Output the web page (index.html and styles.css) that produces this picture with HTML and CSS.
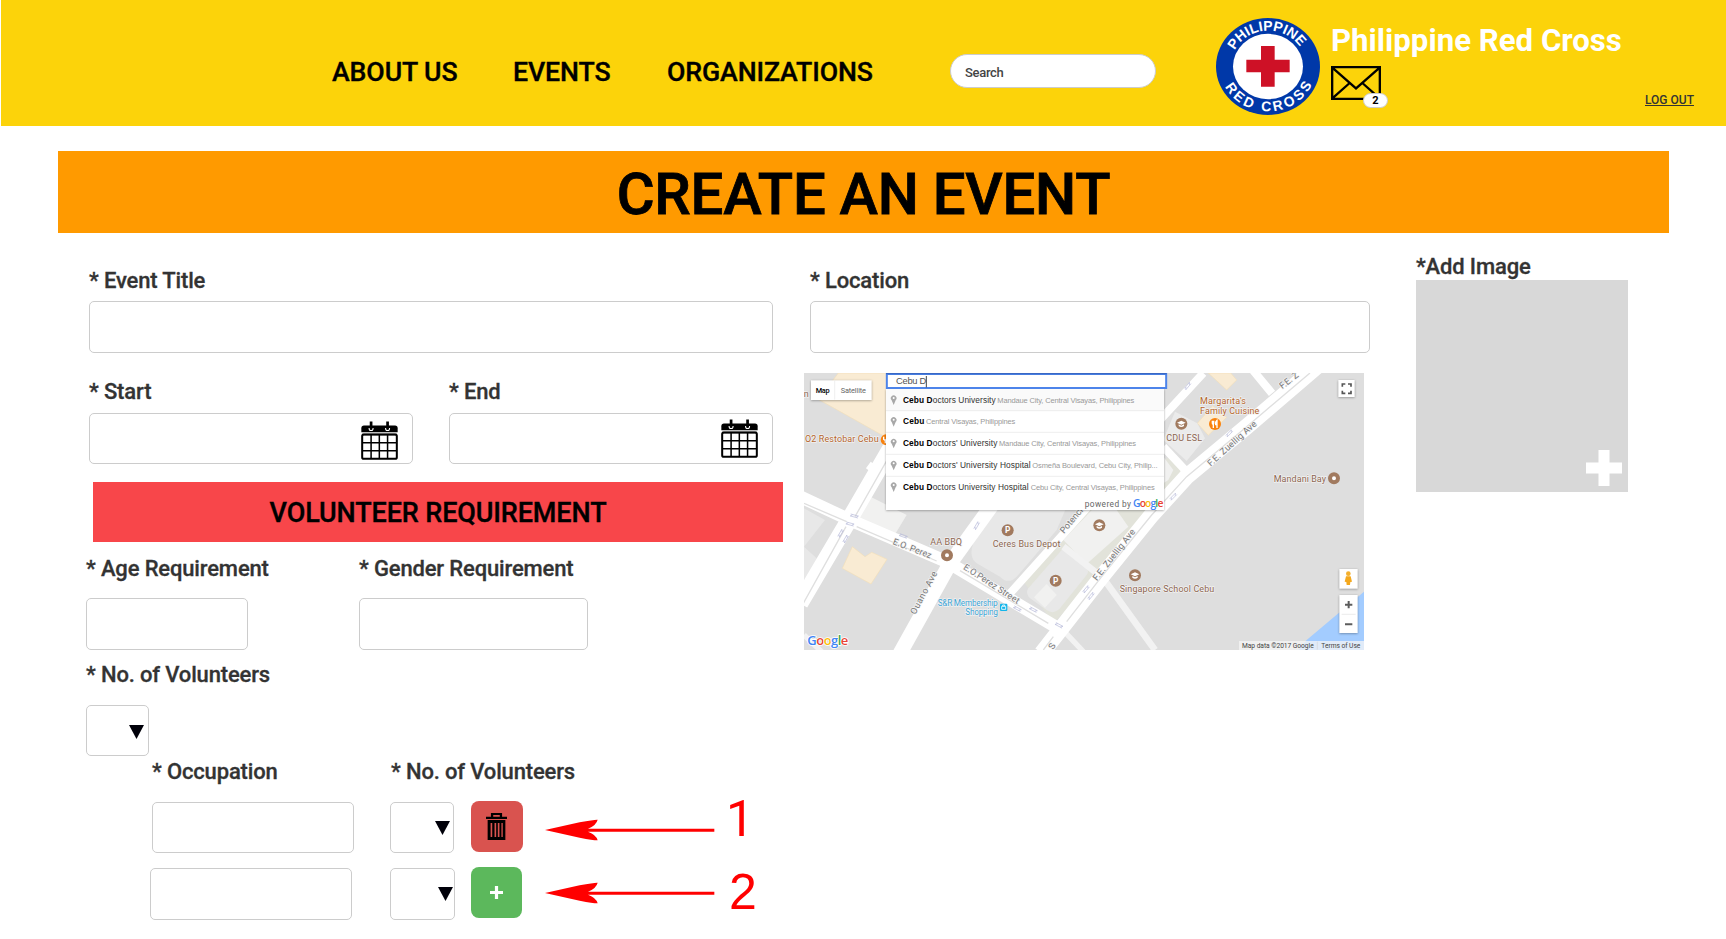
FILE: index.html
```html
<!DOCTYPE html>
<html lang="en">
<head>
<meta charset="utf-8">
<title>Create an Event</title>
<link rel="stylesheet" href="styles.css">
</head>
<body>
<svg class="defs" width="0" height="0">
  <defs>
    <symbol id="calendar" viewBox="0 0 110 115">
      <path d="M9 13h92q8 0 8 8v12H1V21q0-8 8-8z"/>
      <path d="M30 1v26M79 1v26" stroke="#000" stroke-width="8"/>
      <path d="M24 20q0 8 6 8t6-8M73 20q0 8 6 8t6-8" fill="none" stroke="#fff" stroke-width="3"/>
      <rect x="3.500" y="40" width="103" height="72" rx="5" fill="#fff" stroke="#000" stroke-width="6"/>
      <path d="M3 40h104M30 38v74M54.500 38v74M79 38v74M3 64h104M3 88h104" stroke="#000" stroke-width="4.500"/>
    </symbol>
    <symbol id="arrow" viewBox="0 0 510 64">
      <path d="M0 32 104 9Q150 0 158 1 154 18 129 28H508V37H129Q154 46 158 63 150 64 104 55z" fill="#f00"/>
    </symbol>
    <g id="cap-pin">
      <circle r="18" fill="#a17a5f"/>
      <path d="M-13-3 0-9 13-3 0 3zM-8 2v5Q0 13 8 7V2L0 6z" fill="#fff"/>
    </g>
    <g id="place"><path d="M0 14-6 0A8.500 8.500 0 1 1 6 0z" fill="#a8a8a8"/><circle cy="-7" r="3" fill="#fff"/></g>
    <g id="lane"><path d="M-12 3H12M-12 3l6-5M12-3H-12M12-3l-6 5" fill="none" stroke="#b4b7d8" stroke-width="1.800"/></g>
  </defs>
</svg>

<header class="topbar">
  <nav class="nav">
    <a class="nav-about">ABOUT US</a>
    <a class="nav-events">EVENTS</a>
    <a class="nav-orgs">ORGANIZATIONS</a>
  </nav>
  <div class="search">Search</div>
  <svg class="logo" viewBox="33 30 312 291" preserveAspectRatio="none">
    <defs>
      <path id="arc-top" d="M89 127A112 105 0 0 1 292 130"/>
      <path id="arc-bottom" d="M60 236A145 136 0 0 0 322 228"/>
    </defs>
    <ellipse cx="189" cy="175.500" rx="156" ry="145.500" fill="#0038a8"/>
    <ellipse cx="189" cy="175.500" rx="105" ry="98" fill="#fff"/>
    <path d="M168 114h41v41h45v38h-45v43h-41v-43h-44v-38h44z" fill="#ce1126"/>
    <text class="logo-text"><textPath href="#arc-top" textLength="234">PHILIPPINE</textPath></text>
    <text class="logo-text"><textPath href="#arc-bottom" textLength="318">RED CROSS</textPath></text>
  </svg>
  <div class="account">
    <div class="account-name">Philippine Red Cross</div>
    <div class="mail">
      <svg class="mail-icon" viewBox="0 0 150 102">
        <path d="M3.500 3.500H146.500V98.500H3.500zM4 5 75 67 146 5M4 97 56 51M146 97 94 51" fill="none" stroke="#000" stroke-width="7"/>
      </svg>
      <span class="badge">2</span>
    </div>
  </div>
  <a class="logout">LOG OUT</a>
</header>

<main>
  <h1 class="banner"><span>CREATE AN EVENT</span></h1>
  <div class="columns">
    <section class="details">
      <div class="field title-field"><label>* Event Title</label><div class="box"></div></div>
      <div class="dates">
        <div class="field"><label>* Start</label><div class="box date"><svg class="cal"><use href="#calendar"/></svg></div></div>
        <div class="field"><label>* End</label><div class="box date end"><svg class="cal"><use href="#calendar"/></svg></div></div>
      </div>
      <h2 class="requirement"><span>VOLUNTEER REQUIREMENT</span></h2>
      <div class="limits">
        <div class="field age"><label>* Age Requirement</label><div class="box"></div></div>
        <div class="field gender"><label>* Gender Requirement</label><div class="box"></div></div>
      </div>
      <div class="field total"><label>* No. of Volunteers</label><div class="box select"><i class="tri"></i></div></div>
      <div class="roles-head"><label class="occ">* Occupation</label><label>* No. of Volunteers</label></div>
      <div class="role first">
        <div class="box job"></div>
        <div class="box select"><i class="tri"></i></div>
        <button class="btn danger">
          <svg class="trash" viewBox="0 0 64 82"><path d="M15 11V0h34v11h15v7H0v-7zM22 11h20V6H22zM5 21h54v61H5zM14 30v43h5V30zM26 30v43h5V30zM36 30v43h5V30zM47 30v43h4V30z" fill-rule="evenodd"/></svg>
        </button>
        <svg class="arrow"><use href="#arrow"/></svg>
        <span class="mark">1</span>
      </div>
      <div class="role second">
        <div class="box job"></div>
        <div class="box select"><i class="tri"></i></div>
        <button class="btn success"><svg class="plus" viewBox="0 0 13 13"><path d="M6.500 0v13M0 6.500h13" stroke="#fff" stroke-width="3.200"/></svg></button>
        <svg class="arrow"><use href="#arrow"/></svg>
        <span class="mark">2</span>
      </div>
    </section>

    <section class="place">
      <div class="field location"><label>* Location</label><div class="box"></div></div>
      <svg class="map" viewBox="42 39 1680 831" preserveAspectRatio="none">
        <rect x="42" y="39" width="1680" height="831" fill="#dedede"/>
        <g fill="#f9ebd3" stroke="#f3dfb8" stroke-width="2">
          <path d="M145 39H330V260L288 232 85 118z"/>
          <path d="M187 560 225 590 245 577 291 598 243 672 157 625z"/>
          <path d="M1255 39 1310 90 1340 60 1322 39z"/>
          <path d="M1222 190 1268 137 1310 172 1255 226z"/>
        </g>
        <path d="M690 650 900 420 1140 290 1180 340 980 590 790 790z" fill="#e2e3da"/>
        <g fill="#e8e8e8">
          <path d="M590 440H830L800 510 680 650Q655 675 630 650L560 610Q535 590 550 550z"/>
          <path d="M815 570Q825 560 835 570L890 625Q898 635 890 645L810 745Q790 765 770 750L720 715Q705 700 715 685z"/>
          <path d="M42 560 80 595 70 620 42 660zM42 445 105 480 42 560z"/>
        </g>
        <g fill="#f1f1f0">
          <path d="M237 408 350 465 300 548 180 500z"/>
          <path d="M820 540 915 440 980 450 1015 500 890 612z"/>
          <path d="M770 672 800 705 765 743 732 712z"/>
          <path d="M1155 155 1222 190 1245 235 1190 303 1120 240z" fill="#ebebeb"/>
          <path d="M1120 290 1150 330 1135 360 1120 370z"/>
        </g>
        <g fill="none" stroke="#f2f2f2">
          <path d="M820 560 940 655 1095 870" stroke-width="20"/>
          <path d="M800 790 880 875M42 825 100 880" stroke-width="16"/>
        </g>
        <g fill="none" stroke="#fff">
          <path d="M345 190 180 475 30 730" stroke-width="50"/>
          <path d="M30 410 180 480 470 605 800 802" stroke-width="38"/>
          <path d="M610 430 480 610 330 880" stroke-width="44"/>
          <path d="M235 315 275 345M930 400 660 700M1240 39 1110 180M1380 20 1446 100M1120 260 1190 335" stroke-width="24"/>
          <path d="M1580 20 1370 200 1190 350 1085 465 935 650 755 880" stroke-width="48"/>
        </g>
        <g fill="none" stroke="#dfdfdf" stroke-width="4">
          <path d="M345 205 195 470M168 500 40 730M42 430 170 485M200 500 440 603M510 632 775 790M1560 39 1370 200 1190 350 1085 465 935 650 830 785M790 830 760 870"/>
        </g>
        <path d="M1722 695 1550 840 1525 870H1722z" fill="#a3ccff"/>
        <g>
          <use href="#lane" transform="translate(193 468) rotate(15)"/><use href="#lane" transform="translate(180 492) rotate(15)"/>
          <use href="#lane" transform="translate(152 520) rotate(-60)"/><use href="#lane" transform="translate(167 537) rotate(-60)"/>
          <use href="#lane" transform="translate(340 528) rotate(20)"/><use href="#lane" transform="translate(560 497) rotate(-60)"/>
          <use href="#lane" transform="translate(682 746) rotate(28)"/><use href="#lane" transform="translate(730 749) rotate(28)"/>
          <use href="#lane" transform="translate(807 796) rotate(28)"/><use href="#lane" transform="translate(888 688) rotate(-50)"/>
          <use href="#lane" transform="translate(903 708) rotate(-50)"/><use href="#lane" transform="translate(1150 410) rotate(-45)"/>
          <use href="#lane" transform="translate(1318 220) rotate(-45)"/><use href="#lane" transform="translate(1193 78) rotate(-50)"/>
        </g>

        <g class="street">
          <text transform="translate(307 552) rotate(21)" textLength="122">E.O. Perez</text>
          <text transform="translate(518 626) rotate(33)" textLength="195">E.O.Perez Street</text>
          <text transform="translate(376 765) rotate(-62)" textLength="142">Ouano Ave</text>
          <text transform="translate(822 522) rotate(-50)">Potenciano</text>
          <text transform="translate(921 664) rotate(-52)" textLength="188">F.E. Zuellig Ave</text>
          <text transform="translate(1262 320) rotate(-42)" textLength="188">F.E. Zuellig Ave</text>
          <text transform="translate(1477 88) rotate(-38)">F.E. Z</text>
          <text transform="translate(790 870) rotate(-60)">S</text>
        </g>
        <g class="poi">
          <text x="41" y="111">n</text>
          <text x="421" y="555" textLength="95">AA BBQ</text>
          <text x="608" y="562" textLength="203">Ceres Bus Depot</text>
          <text x="1129" y="242" textLength="107">CDU ESL</text>
          <text x="1451" y="365" textLength="157">Mandani Bay</text>
          <text x="989" y="697" textLength="284">Singapore School Cebu</text>
          <g fill="#b5652b">
            <text x="45" y="247" textLength="221">O2 Restobar Cebu</text>
            <text x="1230" y="133" textLength="138">Margarita's</text>
            <text x="1230" y="162" textLength="178">Family Cuisine</text>
          </g>
          <g class="shop">
            <text x="443" y="738" textLength="180">S&amp;R Membership</text>
            <text x="526" y="764" textLength="98">Shopping</text>
          </g>
        </g>
        <g>
          <circle cx="471" cy="586" r="12" fill="#fff" stroke="#a17a5f" stroke-width="12"/>
          <circle cx="1632" cy="355" r="12" fill="#fff" stroke="#a17a5f" stroke-width="12"/>
          <circle cx="653" cy="511" r="18" fill="#a17a5f"/><text class="park" x="653" y="520">P</text>
          <circle cx="797" cy="662" r="18" fill="#a17a5f"/><text class="park" x="797" y="671">P</text>
          <use href="#cap-pin" x="928" y="496"/><use href="#cap-pin" x="1174" y="191"/><use href="#cap-pin" x="1035" y="646"/>
          <circle cx="1275" cy="192" r="18" fill="#f9820d"/>
          <path d="M1267 182v8q0 3 3 3v11M1271 182v10M1281 204V181q-6 5-4 13h4" fill="none" stroke="#fff" stroke-width="4"/>
          <circle cx="288" cy="239" r="16" fill="#f9820d"/>
          <path d="M281 230v8q4 4 5 3v9" fill="none" stroke="#fff" stroke-width="4"/>
          <rect x="630" y="731" width="22" height="22" rx="3" fill="#13b5ea"/><path d="M635 739h12v9h-12zM638 738v-3h6v3" fill="none" stroke="#fff" stroke-width="2.500"/>
        </g>

        <g class="shadow">
          <rect x="63" y="61" width="182" height="59" fill="#fff"/>
          <rect x="288" y="87" width="834" height="363" fill="#fff"/>
          <rect x="1645" y="60" width="49" height="51" fill="#fff"/>
          <rect x="1648" y="627" width="55" height="59" fill="#fff"/>
          <rect x="1648" y="705" width="55" height="114" fill="#fff"/>
        </g>
        <path d="M134 62v57" stroke="#e8e8e8" stroke-width="2"/>
        <text class="tab on" x="77" y="99" textLength="42">Map</text>
        <text class="tab" x="152" y="99" textLength="76">Satellite</text>

        <rect x="288" y="88" width="834" height="64" fill="#fafafa"/>
        <path d="M288 152h834M288 217h834M288 283h834M288 349h834" stroke="#e6e6e6" stroke-width="2"/>
        <rect x="290.500" y="42" width="838" height="42" fill="#fff" stroke="#4d84ea" stroke-width="6"/>
        <path d="M288 41h842" stroke="#3a68c4" stroke-width="4"/>
        <text class="typed" x="318" y="73" textLength="91">Cebu D</text>
        <path d="M409 48v34" stroke="#222" stroke-width="2.500"/>
        <use href="#place" x="311" y="121"/><use href="#place" x="311" y="186"/><use href="#place" x="311" y="251"/><use href="#place" x="311" y="317"/><use href="#place" x="311" y="382"/>
        <g class="hit">
          <text x="339" y="128" textLength="278"><tspan class="match">Cebu D</tspan>octors University</text>
          <text x="339" y="193" textLength="64"><tspan class="match">Cebu</tspan></text>
          <text x="339" y="258" textLength="283"><tspan class="match">Cebu D</tspan>octors' University</text>
          <text x="339" y="324" textLength="383"><tspan class="match">Cebu D</tspan>octors' University Hospital</text>
          <text x="339" y="389" textLength="377"><tspan class="match">Cebu D</tspan>octors University Hospital</text>
        </g>
        <g class="where">
          <text x="622" y="129" textLength="411">Mandaue City, Central Visayas, Philippines</text>
          <text x="408" y="193" textLength="268">Central Visayas, Philippines</text>
          <text x="627" y="258" textLength="411">Mandaue City, Central Visayas, Philippines</text>
          <text x="727" y="325" textLength="376">Osmeña Boulevard, Cebu City, Philip...</text>
          <text x="722" y="389" textLength="372">Cebu City, Central Visayas, Philippines</text>
        </g>
        <text class="powered" x="884" y="440" textLength="139">powered by</text>
        <text class="google" font-size="31" x="1029" y="441" textLength="91"><tspan fill="#4285f4">G</tspan><tspan fill="#ea4335">o</tspan><tspan fill="#fbbc05">o</tspan><tspan fill="#4285f4">g</tspan><tspan fill="#34a853">l</tspan><tspan fill="#ea4335">e</tspan></text>
        <text class="google outlined" font-size="39" x="52" y="855" textLength="123"><tspan fill="#4285f4">G</tspan><tspan fill="#ea4335">o</tspan><tspan fill="#fbbc05">o</tspan><tspan fill="#4285f4">g</tspan><tspan fill="#34a853">l</tspan><tspan fill="#ea4335">e</tspan></text>

        <path d="M1657 80v-8h9M1674 72h9v8M1683 92v8h-9M1666 100h-9v-8" fill="none" stroke="#555" stroke-width="5"/>
        <circle cx="1675" cy="641" r="7" fill="#f4b02e"/><path d="M1668 649h14l4 16-5 1-1 9h-10l-1-9-5-1z" fill="#f4a81d"/>
        <path d="M1665 734h22M1676 723v22M1665 793h22" stroke="#5c5c5c" stroke-width="6"/><path d="M1655 763h42" stroke="#e2e2e2" stroke-width="2"/>
        <rect x="1347" y="843" width="375" height="27" fill="#f5f5f5" opacity=".75"/>
        <path d="M1582 845v24" stroke="#d4d4d4" stroke-width="2"/>
        <text class="legal" x="1356" y="865" textLength="215">Map data ©2017 Google</text>
        <text class="legal" x="1594" y="865" textLength="117">Terms of Use</text>
      </svg>
    </section>

    <section class="picture">
      <label>*Add Image</label>
      <div class="drop"><svg class="drop-plus" viewBox="0 0 36 36"><path d="M12.500 0h11v12.500H36v11H23.500V36h-11V23.500H0v-11h12.500z" fill="#fff"/></svg></div>
    </section>
  </div>
</main>
</body>
</html>
```
FILE: styles.css
```css
* { box-sizing: border-box; }
body { margin: 0; width: 1726px; height: 939px; overflow: hidden; background: #fff; font-family: Roboto, "Liberation Sans", sans-serif; color: #333; }
.defs { position: absolute; }
svg { display: block; flex: none; }

.topbar { display: flex; align-items: flex-start; height: 126px; margin-left: 1px; background: #fcd30a; }
.nav { display: flex; width: 618px; margin: 56px 0 0 331px; color: #000; font-size: 26.700px; font-weight: 500; line-height: 32px; letter-spacing: -.1px; white-space: nowrap; -webkit-text-stroke: .35px; }
.nav-about { width: 181px; }
.nav-events { width: 154px; }
.search { width: 206px; height: 34px; padding-left: 14px; margin-top: 54px; border: 1px solid #ccc; border-radius: 17px; background: #fff; color: #444; font-size: 13px; line-height: 35px; font-weight: 500; letter-spacing: -.3px; }
.logo { width: 104px; height: 97px; margin: 18px 0 0 60px; }
.logo-text { fill: #fff; font: bold 42px "Liberation Sans", sans-serif; }
.account { width: 300px; margin: 21px 0 0 11px; }
.account-name { height: 45px; padding-top: 1px; color: #fff; font-size: 31.200px; font-weight: 700; line-height: 38px; white-space: nowrap; }
.mail { position: relative; width: 50px; height: 34px; }
.mail-icon { width: 50px; height: 34px; }
.badge { position: absolute; left: 32px; top: 27px; width: 25px; height: 15px; border: 1px solid #ccc; border-radius: 8px; background: #fff; color: #000; font-size: 11px; font-weight: 700; line-height: 14px; text-align: center; }
.logout { margin: 93px 0 0 14px; color: #333; font-size: 12px; font-weight: 500; line-height: 15px; text-decoration: underline; white-space: nowrap; }

.banner { display: flex; justify-content: center; width: 1611px; height: 82px; margin: 25px 0 0 58px; background: #ff9a00; color: #000; font-size: 58px; font-weight: 500; line-height: 86px; letter-spacing: -.25px; white-space: nowrap; -webkit-text-stroke: .8px; }
.columns { display: flex; align-items: flex-start; }
label { display: block; height: 27px; padding-top: 1px; font-size: 22px; font-weight: 500; line-height: 26px; letter-spacing: -.15px; white-space: nowrap; -webkit-text-stroke: .3px; }
.box { flex: none; height: 52px; border: 1px solid #ccc; border-radius: 5px; background: #fff; }
.field .box { margin-top: 7px; }

.details { flex: none; width: 804px; padding: 34px 0 0 86px; }
.title-field { width: 687px; padding-left: 3px; }
.dates { display: flex; gap: 36px; margin: 25px 0 0 3px; }
.dates .field { flex: none; width: 324px; }
.dates .box { height: 51px; margin-top: 8px; }
.date { display: flex; justify-content: flex-end; padding: 7px 14px 0 0; }
.date.end { padding-top: 5px; }
.cal { width: 37px; height: 39px; }
.requirement { display: flex; justify-content: center; width: 690px; height: 60px; margin: 18px 0 0 7px; background: #f8464a; color: #000; font-size: 27px; font-weight: 500; line-height: 62px; letter-spacing: -.12px; white-space: nowrap; -webkit-text-stroke: .35px; }
.limits { display: flex; gap: 111px; margin-top: 13px; }
.limits .box { margin-top: 16px; }
.total .box { margin-top: 17px; }
.age { width: 162px; }
.gender { width: 229px; }
.total { margin-top: 11px; }
.select { display: flex; justify-content: flex-end; width: 63px; height: 51px; }
.tri { width: 15px; height: 14px; background: #000009; clip-path: polygon(0 0, 100% 0, 50% 100%); }
.total .tri { margin: 19px 4px 0 0; }
.roles-head { display: flex; margin: 2px 0 0 66px; }
.occ { width: 239px; }
.role { display: flex; height: 52px; }
.job { width: 202px; margin-right: 36px; }
.first { margin: 17px 0 0 66px; }
.first .job { height: 51px; }
.first .select { width: 64px; }
.first .tri { margin: 18px 3px 0 0; }
.second { margin: 14px 0 0 64px; }
.second .job { margin-right: 38px; }
.second .select { width: 65px; height: 52px; }
.second .tri { margin: 18px 1px 0 0; }
.btn { display: flex; flex: none; align-items: center; justify-content: center; width: 52px; height: 51px; margin: -1px 0 0 17px; padding: 0; border: 0; border-radius: 8px; }
.danger { padding-right: 1px; background: #d9534f; }
.success { width: 51px; margin-left: 16px; background: #5cb85c; }
.trash { width: 21px; height: 27px; }
.plus { width: 13px; height: 13px; }
.arrow { width: 170px; height: 22px; margin: 17px 0 0 22px; }
.second .arrow { margin: 14px 0 0 23px; }
.mark { margin: -13px 0 0 11px; color: #f00; font: 50px/60px Roboto, Arial, sans-serif; }
.second .mark { margin: -6px 0 0 14px; font-family: "Liberation Sans", Arial, sans-serif; }

.place { flex: none; width: 612px; padding-top: 34px; }
.location { width: 566px; padding-left: 6px; }
.map { width: 560px; height: 277px; margin-top: 20px; font-family: Roboto, sans-serif; }
.street { fill: #777; font-size: 27px; stroke: #f4f4f4; stroke-width: 4px; paint-order: stroke; }
.poi { fill: #8d6650; font-size: 27px; font-weight: 400; stroke: #f2f2f2; stroke-width: 4px; paint-order: stroke; }
.shop { fill: #3ba4d6; font-size: 25px; }
.park { fill: #fff; font-size: 25px; font-weight: 700; text-anchor: middle; }
.shadow { filter: drop-shadow(0 2px 3px rgba(0, 0, 0, .35)); }
.tab { fill: #666; font-size: 22px; }
.tab.on { fill: #000; font-weight: 500; }
.typed { fill: #555; font: 28px "Liberation Sans", sans-serif; }
.hit { fill: #333; font: 25px "Liberation Sans", sans-serif; }
.match { fill: #000; font-weight: 700; }
.where { fill: #999; font: 22.500px "Liberation Sans", sans-serif; }
.powered { fill: #666; font-size: 25px; }
.google { font-family: "Open Sans", sans-serif; font-weight: 600; }
.outlined { stroke: #fff; stroke-width: 5px; paint-order: stroke; }
.legal { fill: #444; font-size: 20px; }

.picture { flex: none; padding-top: 20px; }
.drop { display: flex; align-items: flex-end; justify-content: flex-end; width: 212px; height: 212px; padding: 6px; background: #d8d8d8; }
.drop-plus { width: 36px; height: 36px; }
```
